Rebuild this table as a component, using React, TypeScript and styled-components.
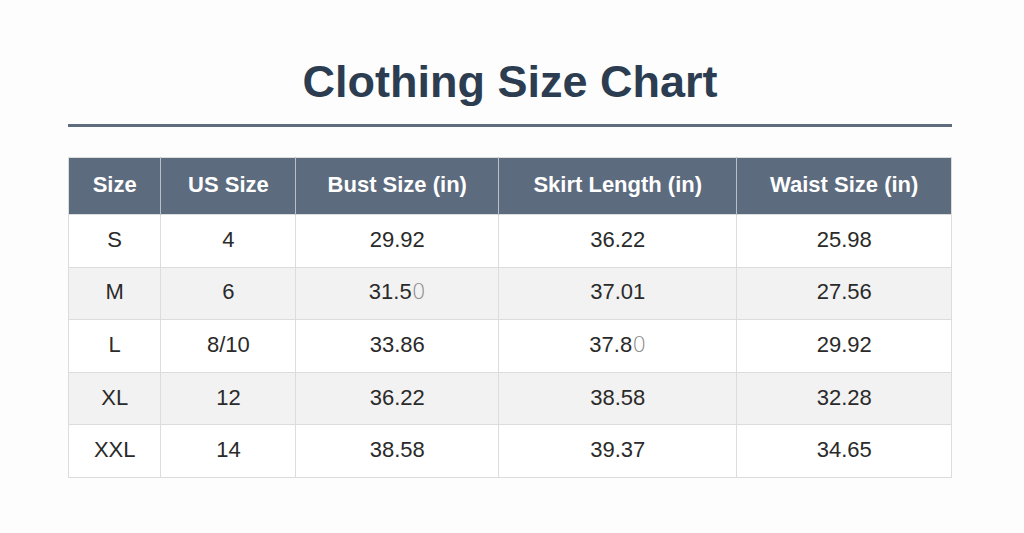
import styled, { createGlobalStyle } from "styled-components";

const GlobalStyle = createGlobalStyle`
  html, body {
    margin: 0;
    padding: 0;
    background: #fdfdfd;
  }
  body {
    font-family: "Liberation Sans", Arial, sans-serif;
  }
`;

const Page = styled.div`
  width: 1024px;
  height: 533px;
  box-sizing: border-box;
  padding: 56px 72px 0 68px;
`;

const Title = styled.h1`
  margin: 0;
  padding-bottom: 16px;
  text-align: center;
  font-size: 45px;
  line-height: 52px;
  font-weight: 700;
  color: #2c3d52;
  border-bottom: 3px solid #5f6c7d;
`;

const Table = styled.table`
  margin-top: 30px;
  width: 884px;
  border-collapse: collapse;
  table-layout: fixed;
  font-size: 22px;
  border: 1px solid #dcdcdc;
`;

const HeadCell = styled.th<{ $w: number }>`
  width: ${(p) => (p.$w / 884) * 100}%;
  height: 54px;
  padding: 0 0 2px;
  background: #5d6b7e;
  color: #ffffff;
  font-weight: 700;
  text-align: center;
  border-left: 1px solid #b9c0c9;
  &:first-child {
    border-left: none;
  }
`;

const Row = styled.tr<{ $alt: boolean }>`
  background: ${(p) => (p.$alt ? "#f2f2f2" : "#ffffff")};
`;

const Cell = styled.td`
  height: 49.6px;
  padding: 0 0 2px;
  text-align: center;
  color: #2a2a2a;
  border: 1px solid #dcdcdc;
`;

const Faint = styled.span`
  color: #8a8a8a;
  font-family: "DejaVu Sans", sans-serif;
  font-weight: 200;
  font-size: 22px;
`;

const columns = [
  { label: "Size", w: 92 },
  { label: "US Size", w: 135 },
  { label: "Bust Size (in)", w: 203 },
  { label: "Skirt Length (in)", w: 239 },
  { label: "Waist Size (in)", w: 215 },
];

const rows: (string | [string, string])[][] = [
  ["S", "4", "29.92", "36.22", "25.98"],
  ["M", "6", ["31.5", "0"], "37.01", "27.56"],
  ["L", "8/10", "33.86", ["37.8", "0"], "29.92"],
  ["XL", "12", "36.22", "38.58", "32.28"],
  ["XXL", "14", "38.58", "39.37", "34.65"],
];

export default function App() {
  return (
    <Page>
      <GlobalStyle />
      <Title>Clothing Size Chart</Title>
      <Table>
        <thead>
          <tr>
            {columns.map((c) => (
              <HeadCell key={c.label} $w={c.w}>
                {c.label}
              </HeadCell>
            ))}
          </tr>
        </thead>
        <tbody>
          {rows.map((r, i) => (
            <Row key={i} $alt={i % 2 === 1}>
              {r.map((v, j) => (
                <Cell key={j}>
                  {Array.isArray(v) ? (
                    <>
                      {v[0]}
                      <Faint>{v[1]}</Faint>
                    </>
                  ) : (
                    v
                  )}
                </Cell>
              ))}
            </Row>
          ))}
        </tbody>
      </Table>
    </Page>
  );
}
